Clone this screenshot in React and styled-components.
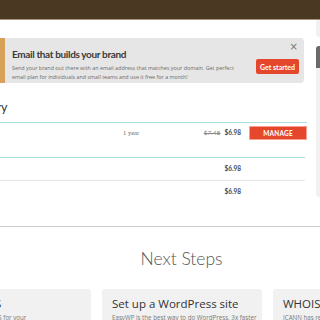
import React from 'react'
import styled, { createGlobalStyle } from 'styled-components'

const Global = createGlobalStyle`
  html, body { margin: 0; padding: 0; background: #fff; }
  body { font-family: Lato, "Open Sans", sans-serif; }
`

const Page = styled.div`
  width: 320px;
  height: 320px;
  overflow: hidden;
`

const Header = styled.div`
  height: 19px;
  background: #4b3822;
  border-bottom: 1px solid #a39585;
`

const Top = styled.div`
  display: flex;
  gap: 9px;
  height: 206px;
  border-bottom: 1px solid #cfcfcf;
`

const Main = styled.div`
  width: 307px;
  flex: none;
`

const Banner = styled.div`
  margin-top: 18px;
  width: 304px;
  height: 45px;
  box-sizing: border-box;
  background: #e6e6e6;
  border-left: 5px solid #d8a15a;
  border-radius: 0 4px 4px 0;
  padding: 7px 5px 0 7px;
  display: flex;
  position: relative;
`

const BannerText = styled.div`
  flex: 1;
  min-width: 0;
`

const BannerTitle = styled.div`
  font-weight: 700;
  font-size: 10px;
  letter-spacing: -0.35px;
  color: #3a3a3a;
  line-height: 14px;
  margin-top: 2px;
`

const BannerDesc = styled.div`
  font-family: "Open Sans", sans-serif;
  font-size: 5.4px;
  line-height: 8.5px;
  color: #6b6b6b;
  margin-top: 3px;
  white-space: nowrap;
`

const Close = styled.div`
  position: absolute;
  top: 3px;
  right: 6px;
  font-size: 10px;
  color: #777;
  font-family: "DejaVu Sans", sans-serif;
`

const RedButton = styled.div`
  background: #e5472c;
  color: #fff;
  font-weight: 700;
  border-radius: 2px;
  display: flex;
  align-items: center;
  justify-content: center;
  flex: none;
  font-size: ${({ small }) => (small ? '6.5px' : '7px')};
  letter-spacing: ${({ small }) => (small ? '0.2px' : '0')};
  width: ${({ w }) => w}px;
  height: ${({ h }) => h}px;
`

const StartButton = styled(RedButton)`
  margin-top: 14px;
`

const SectionTitle = styled.div`
  margin-top: 15px;
  margin-left: -90px;
  font-size: 12.5px;
  color: #333;
  height: 24px;
  line-height: 20px;
`

const Row = styled.div`
  display: flex;
  align-items: flex-start;
  width: ${({ full }) => (full ? 307 : 305)}px;
  height: ${({ h }) => h}px;
  box-sizing: border-box;
  border-top: 1px solid ${({ line }) => line || 'transparent'};
  padding-top: ${({ pt }) => pt}px;
`

const Term = styled.div`
  flex: 1;
  margin-left: 123px;
  font-family: "Liberation Serif", serif;
  font-size: 6.5px;
  color: #666;
  line-height: 14px;
`

const Prices = styled.div`
  width: ${({ w }) => (w ? `${w}px` : 'auto')};
  text-align: right;
  font-size: 6.5px;
  font-weight: 700;
  color: #3e4b58;
  line-height: 14px;
  flex: none;
  white-space: nowrap;
`

const Old = styled.span`
  text-decoration: line-through;
  color: #8a8a8a;
  font-weight: 400;
  margin-right: 4px;
`

const Manage = styled(RedButton)`
  margin-left: 8px;
  box-shadow: 0 0 0 1px #f3a090 inset;
`

const Sidebar = styled.div`
  flex: none;
  width: 120px;
  display: flex;
  flex-direction: column;
  gap: 9px;
`

const SideBox = styled.div`
  background: #f1f1f1;
  height: ${({ h }) => h}px;
  border-radius: 3px 0 0 3px;
  overflow: hidden;
`

const SideHead = styled.div`
  height: 22px;
  background: #6a6a6a;
`

const Steps = styled.div`
  display: flex;
  flex-direction: column;
  align-items: center;
`

const StepsTitle = styled.div`
  margin-top: 21px;
  font-size: 17.5px;
  font-weight: 300;
  color: #555;
  line-height: 22px;
  margin-left: 43px;
`

const Cards = styled.div`
  display: flex;
  gap: 11px;
  margin-top: 19px;
  margin-left: -69px;
  align-self: flex-start;
`

const Card = styled.div`
  width: 160px;
  height: 60px;
  flex: none;
  background: #f1f1f1;
  border-radius: 3px;
  box-sizing: border-box;
  padding: 8px 10px;
`

const CardTitle = styled.div`
  font-size: 11.5px;
  color: #333;
  line-height: 14px;
  font-family: "Open Sans", sans-serif;
`

const CardDesc = styled.div`
  font-family: "Open Sans", sans-serif;
  font-size: 6.2px;
  color: #777;
  margin-top: 2px;
  white-space: nowrap;
`

const cards = [
  { title: 'Set up DNS', desc: 'Easily set up the DNS for your' },
  { title: 'Set up a WordPress site', desc: 'EasyWP is the best way to do WordPress, 3x faster' },
  { title: 'WHOIS Validation', desc: 'ICANN has recently introduced' },
]

export default function App() {
  return (
    <Page>
      <Global />
      <Header />
      <Top>
        <Main>
          <Banner>
            <BannerText>
              <BannerTitle>Email that builds your brand</BannerTitle>
              <BannerDesc>
                Send your brand out there with an email address that matches your domain. Get perfect
                <br />
                email plan for individuals and small teams and use it free for a month!
              </BannerDesc>
            </BannerText>
            <StartButton w={43} h={15}>Get started</StartButton>
            <Close>×</Close>
          </Banner>
          <SectionTitle>Domain Summary</SectionTitle>
          <Row h={35} pt={3} line="#a9e2de" full>
            <Term>1 year</Term>
            <Prices>
              <Old>$7.48</Old>$6.98
            </Prices>
            <Manage w={58} h={14} small>MANAGE</Manage>
          </Row>
          <Row h={23} pt={4} line="#a9e2de">
            <Prices w={241}>$6.98</Prices>
          </Row>
          <Row h={23} pt={4} line="#e6e6e6">
            <Prices w={241}>$6.98</Prices>
          </Row>
        </Main>
        <Sidebar>
          <SideBox h={17} />
          <SideBox h={151}>
            <SideHead />
          </SideBox>
        </Sidebar>
      </Top>
      <Steps>
        <StepsTitle>Next Steps</StepsTitle>
        <Cards>
          {cards.map(c => (
            <Card key={c.title}>
              <CardTitle>{c.title}</CardTitle>
              <CardDesc>{c.desc}</CardDesc>
            </Card>
          ))}
        </Cards>
      </Steps>
    </Page>
  )
}
